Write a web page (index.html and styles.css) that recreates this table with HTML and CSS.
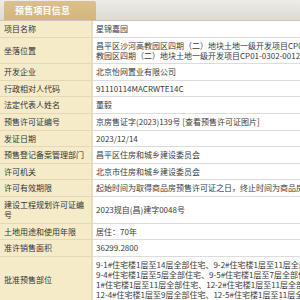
FILE: index.html
```html
<!DOCTYPE html>
<html lang="zh">
<head>
<meta charset="utf-8">
<link rel="stylesheet" href="styles.css">
</head>
<body>
<div class="page">
  <div class="tabbar"><div class="tab">预售项目信息</div></div>
  <div class="grid">
    <div class="lbl">项目名称</div><div class="val">星锦嘉园</div>
    <div class="lbl">坐落位置</div><div class="val">昌平区沙河高教园区四期（二）地块土地一级开发项目CP01-0302-0011地块、昌平区沙河高<br>教园区四期（二）地块土地一级开发项目CP01-0302-0012地块</div>
    <div class="lbl">开发企业</div><div class="val">北京怡网置业有限公司</div>
    <div class="lbl">行政相对人代码</div><div class="val">91110114MACRWTE14C</div>
    <div class="lbl">法定代表人姓名</div><div class="val">董毅</div>
    <div class="lbl">预售许可证编号</div><div class="val">京房售证字(2023)139号 [查看预售许可证图片]</div>
    <div class="lbl">发证日期</div><div class="val">2023/12/14</div>
    <div class="lbl">预售登记备案管理部门</div><div class="val">昌平区住房和城乡建设委员会</div>
    <div class="lbl">许可机关</div><div class="val">北京市住房和城乡建设委员会</div>
    <div class="lbl">许可有效期限</div><div class="val">起始时间为取得商品房预售许可证之日，终止时间为商品房全部销售完毕之日</div>
    <div class="lbl">建设工程规划许可证编<br>号</div><div class="val">2023规自(昌)建字0048号</div>
    <div class="lbl">土地用途和使用年限</div><div class="val">居住：70年</div>
    <div class="lbl">准许销售面积</div><div class="val">36299.2800</div>
    <div class="lbl">批准预售部位</div><div class="val">9-1#住宅楼1层至14层全部住宅、9-2#住宅楼1层至11层全部住宅、9-3#住宅楼1层至<br>9-4#住宅楼1层至5层全部住宅、9-5#住宅楼1层至7层全部住宅、12-<br>1#住宅楼1层至11层全部住宅、12-2#住宅楼1层至11层全部住宅、12-3#住宅楼<br>12-4#住宅楼1层至9层全部住宅、12-5#住宅楼1层至11层全部住宅</div>
  </div>
</div>
</body>
</html>
```
FILE: styles.css
```css
html, body {
  margin: 0;
  padding: 0;
  background: #ffffff;
}
body {
  overflow: hidden;
  font-family: "Noto Sans CJK SC", "Noto Sans", sans-serif;
  color: #333333;
}
.page {
  width: 640px;
}
.tabbar {
  height: 21px;
  padding: 2px 0 0 4px;
  box-sizing: border-box;
  background: linear-gradient(#eeece7, #dddad2);
  border-bottom: 1px solid #c9c6be;
  display: flex;
  align-items: flex-end;
}
.tab {
  width: 92px;
  height: 19px;
  background: linear-gradient(#dcc08c, #d3b47c);
  border-radius: 2px 2px 0 0;
  color: #ffffff;
  font-weight: bold;
  font-size: 9px;
  line-height: 19px;
  padding-left: 11px;
  box-sizing: border-box;
  letter-spacing: 0.2px;
}
.grid {
  display: grid;
  grid-template-columns: 93px 1fr;
}
.lbl, .val {
  font-size: 8px;
  line-height: 10px;
  padding: 3px 0 2.6px 0;
  border-bottom: 1px solid #dcdcdc;
  display: flex;
  align-items: center;
  white-space: nowrap;
}
.lbl {
  background: #f5ebc9;
  padding-left: 4px;
  border-right: 2px solid #e4dcc0;
  border-bottom-color: #e2d8b6;
}
.val {
  background: #ffffff;
  padding-left: 3px;
  color: #3a3a3a;
}
```
